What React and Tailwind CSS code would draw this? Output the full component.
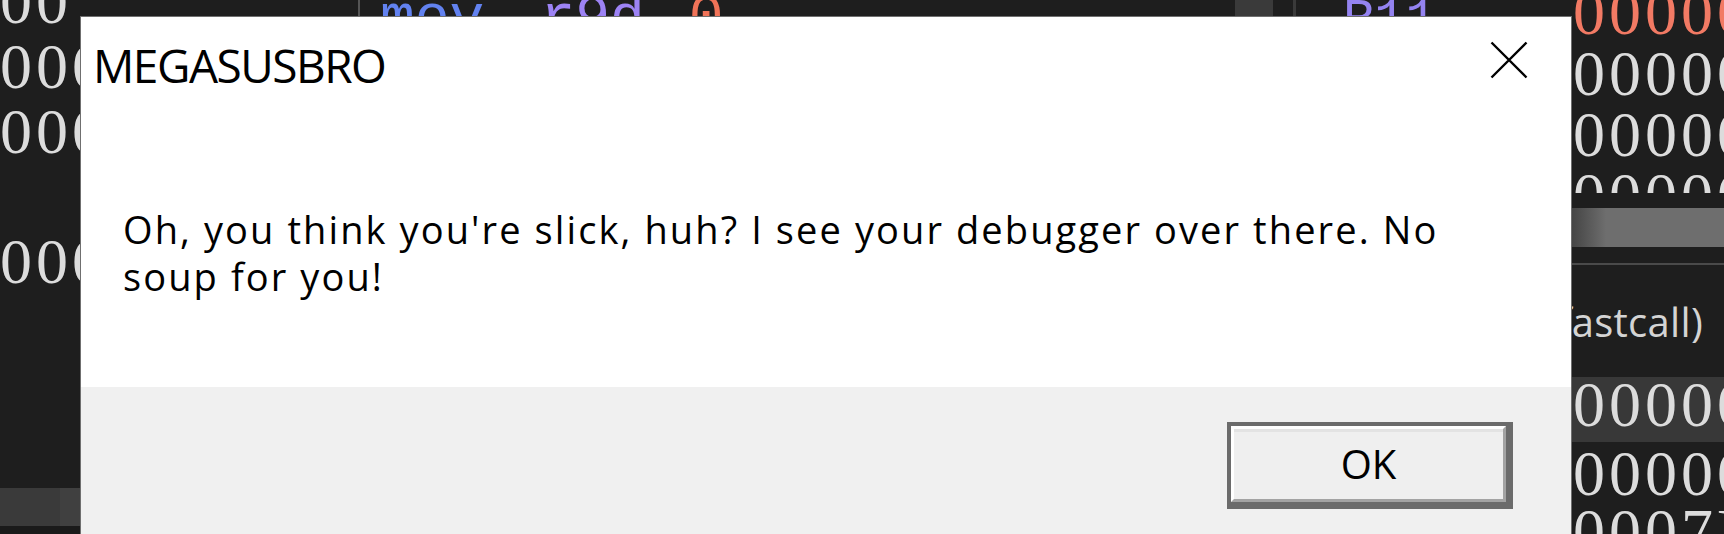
const dumpRows = ["00", "0000000000", "0000000000", "", "0000000000"];

const registers = [
  { name: "R11", value: "0000000000000000", changed: true },
  { name: "R12", value: "0000000000000000" },
  { name: "R13", value: "0000000000000000" },
  { name: "R14", value: "0000000000000000" },
];

const CloseIcon = () => (
  <svg width="38" height="38" viewBox="0 0 38 38" fill="none" stroke="currentColor" strokeWidth="2.4">
    <path d="M1.5 1.5 L36.5 36.5 M36.5 1.5 L1.5 36.5" />
  </svg>
);

const App = () => {
  return (
    <div className="relative h-[534px] w-[1724px] overflow-hidden bg-[#1e1e1e] font-['Liberation_Serif',serif] text-[#dcdcdc]">
      <div className="flex h-full">
        {/* dump */}
        <div className="flex w-[358px] shrink-0 flex-col">
          <div className="h-[488px] shrink-0 overflow-hidden">
            <div className="-mt-[31px] text-[64px] leading-[65px] tracking-[4px]">
              {dumpRows.map((row, i) => (
                <div key={i} className="h-[65px] whitespace-nowrap">
                  {row}
                </div>
              ))}
            </div>
          </div>
          <div className="flex h-[38px] shrink-0 bg-[#3a3a3a]">
            <div className="w-[60px]" />
            <div className="w-[40px] bg-[#404040]" />
          </div>
          <div className="flex-1 bg-[#1a1a1a]" />
        </div>
        <div className="w-[2px] shrink-0 bg-[#555555]" />

        {/* disassembly */}
        <div className="w-[875px] shrink-0 overflow-hidden">
          <div className="-mt-[10px] flex whitespace-nowrap pl-[20px] font-['Liberation_Mono',monospace] text-[58px] leading-[58px]">
            <span className="text-[#6282f0]">mov</span>
            <span className="ml-[56px] text-[#9d83f5]">r9d</span>
            <span className="text-[#b0b0b0]">,</span>
            <span className="ml-[9px] text-[#f07358]">0</span>
          </div>
        </div>
        <div className="w-[38px] shrink-0 bg-[#3a3a3a]" />
        <div className="w-[20px] shrink-0" />
        <div className="w-[3px] shrink-0 bg-[#3a3a3a]" />

        {/* registers */}
        <div className="flex min-w-0 flex-1 flex-col overflow-hidden">
          <div className="h-[193px] shrink-0 overflow-hidden">
            <div className="-mt-[18px]">
              {registers.map((r) => (
                <div key={r.name} className="flex h-[61px] items-baseline whitespace-nowrap leading-[61px]">
                  <span className="w-[277px] shrink-0 pl-[47px] font-['Liberation_Mono',monospace] text-[52px] text-[#9483f0]">
                    {r.name}
                  </span>
                  <span className={`shrink-0 text-[64px] tracking-[4px] ${r.changed ? "text-[#f27a64]" : "text-[#dcdcdc]"}`}>
                    {r.value}
                  </span>
                </div>
              ))}
            </div>
          </div>
          <div className="h-[15px] shrink-0" />
          <div className="flex h-[39px] shrink-0 bg-[#6e6e6e]">
            <div className="w-[276px] shrink-0" />
            <div className="w-[34px] shrink-0 bg-gradient-to-r from-[#454545] to-[#6e6e6e]" />
          </div>
          <div className="h-[16px] shrink-0" />
          <div className="h-[2px] shrink-0 bg-[#4a4a4a]" />
          <div className="flex h-[112px] shrink-0 justify-end whitespace-nowrap pr-[21px] pt-[37px] font-['Open_Sans',sans-serif] text-[40px] leading-[40px] tracking-[0.3px] text-[#d4d4d4]">
            Default (x64 fastcall)
          </div>
          <div className="h-[65px] shrink-0 whitespace-nowrap bg-[#383838] pl-[277px] text-[64px] leading-[55px] tracking-[4px]">
            0000000000000000
          </div>
          <div className="h-[63px] shrink-0 whitespace-nowrap pl-[277px] text-[64px] leading-[63px] tracking-[4px]">
            0000000000000000
          </div>
          <div className="h-[63px] shrink-0 whitespace-nowrap pl-[277px] text-[64px] leading-[53px] tracking-[4px]">
            0007FF0000000000
          </div>
        </div>
      </div>

      {/* message box */}
      <div className="absolute left-[80px] top-[16px] flex h-[540px] w-[1492px] flex-col border border-[#6f6f6f] bg-[#f0f0f0] font-['Open_Sans','Noto_Sans',sans-serif] text-black">
        <div className="h-[370px] shrink-0 bg-white">
          <div className="flex items-start justify-between pl-[12px] pr-[43px] pt-[25px]">
            <span className="text-[46px] leading-[46px] tracking-[-1.5px]">MEGASUSBRO</span>
            <button className="-mt-[1px] text-black">
              <CloseIcon />
            </button>
          </div>
          <p className="mt-[118px] pl-[42px] text-[38px] leading-[47px] tracking-[2.1px]">
            Oh, you think you're slick, huh? I see your debugger over there. No
            <br />
            soup for you!
          </p>
        </div>
        <div className="flex justify-end pr-[58px] pt-[35px]">
          <button className="flex h-[87px] w-[286px] border-b-[7px] border-l-4 border-r-[7px] border-t-4 border-[#6b6b6b] p-0">
            <span className="flex h-full w-full items-center justify-center border-[3px] border-b-[#a3a3a3] border-l-white border-r-[#a3a3a3] border-t-white bg-[#efefef] text-[40px] leading-none shadow-[inset_0_3px_0_#e3e3e3]">
              OK
            </span>
          </button>
        </div>
      </div>
    </div>
  );
};

export default App;
